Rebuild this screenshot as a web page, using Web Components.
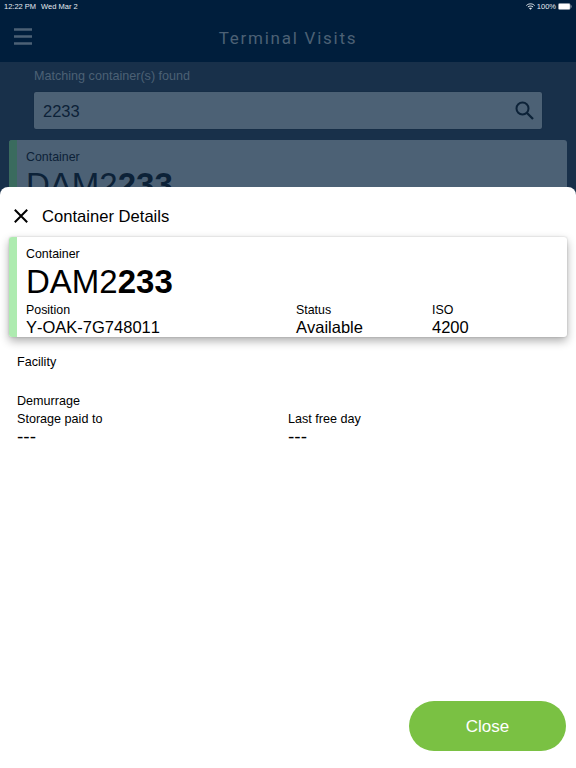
<!DOCTYPE html>
<html lang="en">
<head>
<meta charset="utf-8">
<title>Terminal Visits</title>
<style>
  html, body { margin: 0; padding: 0; }
  body { font-family: "Liberation Sans", Arial, sans-serif; background: #18304a; }
</style>
</head>
<body>
<terminal-app>
  <app-header slot="top"></app-header>
  <search-panel slot="top" label="Matching container(s) found" value="2233"></search-panel>
  <container-card slot="top" dimmed prefix="DAM2" match="233"></container-card>
  <details-sheet slot="sheet" heading="Container Details">
    <container-card prefix="DAM2" match="233" position="Y-OAK-7G748011" status="Available" iso="4200"></container-card>
    <detail-section>
      <span slot="title">Facility</span>
    </detail-section>
    <detail-section>
      <span slot="title">Demurrage</span>
      <info-pair label="Storage paid to" value="---"></info-pair>
      <info-pair label="Last free day" value="---"></info-pair>
    </detail-section>
  </details-sheet>
</terminal-app>

<script>
  // Raiz de la pagina: fondo oscuro + hoja blanca encima
  class TerminalApp extends HTMLElement {
    constructor() {
      super();
      this.attachShadow({ mode: "open" });
      this.shadowRoot.innerHTML = `
        <style>
          :host { display: block; position: relative; width: 576px; height: 768px; overflow: hidden; background: #18304a; }
          .sheet { position: absolute; left: 0; right: 0; top: 187px; bottom: 0; }
        </style>
        <slot name="top"></slot>
        <div class="sheet"><slot name="sheet"></slot></div>
      `;
    }
  }

  class AppHeader extends HTMLElement {
    constructor() {
      super();
      this.attachShadow({ mode: "open" });
      this.shadowRoot.innerHTML = `
        <style>
          :host { display: block; height: 62px; background: #001e3c; color: #fff; }
          .status {
            display: flex; justify-content: space-between; align-items: center;
            height: 12px; padding: 0 4px 0 4px; font-size: 7.5px; color: #e6ebf0;
          }
          .status .right { display: flex; align-items: center; gap: 2px; }
          .status .left span { margin-right: 5px; }
          .bar { display: flex; align-items: center; height: 50px; position: relative; }
          .menu { display: flex; margin-left: 14px; margin-top: -1px; }
          h1 {
            position: absolute; left: 0; right: 0; top: 16px; margin: 0; text-align: center;
            font: 400 17px Roboto, "Liberation Sans", sans-serif; letter-spacing: 1.75px; color: #4c6175;
          }
        </style>
        <div class="status">
          <div class="left"><span>12:22 PM</span><span>Wed Mar 2</span></div>
          <div class="right">
            <svg width="9" height="7" viewBox="0 0 9 7" fill="none" stroke="#e6ebf0" stroke-width="1"><path d="M.4 2.5C2.7.3 6.3.3 8.6 2.5"/><path d="M1.9 4C3.4 2.7 5.6 2.7 7.1 4"/><path d="M4.5 6.8 3 5.2C3.9 4.6 5.1 4.6 6 5.2Z" fill="#e6ebf0" stroke="none"/></svg>
            <span>100%</span>
            <svg width="14" height="7" viewBox="0 0 14 7"><rect x=".4" y=".4" width="11.7" height="6.2" rx="1.4" fill="#fff" stroke="#8b99a8" stroke-width=".6"/><rect x="12.6" y="2.4" width="1" height="2.2" fill="#8b99a8"/></svg>
          </div>
        </div>
        <div class="bar">
          <div class="menu">
            <svg width="18" height="17" viewBox="0 0 18 17"><path d="M0 1.5h18M0 8.5h18M0 15.5h18" stroke="#4c6175" stroke-width="2.4"/></svg>
          </div>
          <h1>Terminal Visits</h1>
        </div>
      `;
    }
  }

  class SearchPanel extends HTMLElement {
    constructor() {
      super();
      this.attachShadow({ mode: "open" });
    }
    connectedCallback() {
      this.shadowRoot.innerHTML = `
        <style>
          :host { display: block; padding: 7px 34px 11px 34px; }
          .label { font-size: 12.6px; line-height: 15px; color: #4c6175; margin-bottom: 8px; }
          .box {
            display: flex; align-items: center; justify-content: space-between;
            box-sizing: border-box; height: 37px; padding: 0 8px 0 9px;
            background: #4c6175; border-radius: 2px; box-shadow: 0 0 1px #0c2238;
            font-size: 16.5px; color: #0c2238;
          }
          .box span { padding-top: 2px; }
          svg { display: block; }
        </style>
        <div class="label">${this.getAttribute("label")}</div>
        <div class="box">
          <span>${this.getAttribute("value")}</span>
          <svg width="19" height="19" viewBox="0 0 19 19" fill="none" stroke="#0c2238" stroke-width="2"><circle cx="7.5" cy="7.5" r="6"/><path d="M12 12l6 6" stroke-width="2.3"/></svg>
        </div>
      `;
    }
  }

  // Tarjeta de contenedor, se usa en el fondo (dimmed) y en la hoja
  class ContainerCard extends HTMLElement {
    constructor() {
      super();
      this.attachShadow({ mode: "open" });
    }
    connectedCallback() {
      const a = (n) => this.getAttribute(n);
      // la tarjeta del fondo queda tapada por la hoja: solo lleva la cabecera
      const details = this.hasAttribute("dimmed") ? "" : `
        <div class="grid">
          <div><div class="small">Position</div><div class="val">${a("position")}</div></div>
          <div><div class="small">Status</div><div class="val">${a("status")}</div></div>
          <div><div class="small">ISO</div><div class="val">${a("iso")}</div></div>
        </div>`;
      this.shadowRoot.innerHTML = `
        <style>
          :host {
            display: block; box-sizing: border-box; height: 100px; margin: 0 9px;
            padding: 0 0 0 17px; border-radius: 3px; position: relative; overflow: hidden;
            background: #fff; color: #000;
          }
          :host([dimmed]) { background: #4c6175; color: #0c2238; }
          .edge { position: absolute; left: 0; top: 0; bottom: 0; width: 8px; background: #aeebb0; }
          :host([dimmed]) .edge { background: #3a6b5e; }
          .small { font-size: 12.4px; line-height: 15px; }
          .name { font-size: 33px; line-height: 38px; margin-top: 1px; height: 38px; }
          .name b { font-weight: 700; }
          .top { padding-top: 10px; }
          .grid { display: grid; grid-template-columns: 270px 136px 1fr; margin-top: 2px; }
          .val { font-size: 16.5px; line-height: 19px; font-kerning: none; }
        </style>
        <div class="edge"></div>
        <div class="top small">Container</div>
        <div class="name">${a("prefix")}<b>${a("match")}</b></div>
        ${details}
      `;
    }
  }

  class DetailsSheet extends HTMLElement {
    constructor() {
      super();
      this.attachShadow({ mode: "open" });
    }
    connectedCallback() {
      this.shadowRoot.innerHTML = `
        <style>
          :host {
            display: flex; flex-direction: column; box-sizing: border-box; height: 100%;
            background: #fff; color: #000; border-radius: 8px 8px 0 0;
          }
          .title { display: flex; align-items: center; gap: 14px; height: 50px; padding: 8px 0 0 14px; box-sizing: border-box; font-size: 16.6px; }
          .title span { padding-top: 2px; }
          svg { display: block; }
          ::slotted(container-card) { box-shadow: 0 4px 10px rgba(0,0,0,.32), 0 0 2px rgba(0,0,0,.2); margin-bottom: 18px; }
          .body { flex: 1; }
          .foot { display: flex; justify-content: flex-end; padding: 0 10px 17px 0; }
        </style>
        <div class="title">
          <svg width="14" height="14" viewBox="0 0 14 14"><path d="M.8.8l12.4 12.4M13.2.8.8 13.2" stroke="#000" stroke-width="2" fill="none"/></svg>
          <span>${this.getAttribute("heading")}</span>
        </div>
        <div class="body"><slot></slot></div>
        <div class="foot"><pill-button>Close</pill-button></div>
      `;
    }
  }

  class DetailSection extends HTMLElement {
    constructor() {
      super();
      this.attachShadow({ mode: "open" });
      this.shadowRoot.innerHTML = `
        <style>
          :host { display: block; padding: 0 0 0 17px; margin-bottom: 21px; font-size: 12.6px; line-height: 15px; }
          .pairs { display: grid; grid-template-columns: 271px 1fr; margin-top: 3px; }
        </style>
        <slot name="title"></slot>
        <div class="pairs"><slot></slot></div>
      `;
    }
  }

  class InfoPair extends HTMLElement {
    constructor() {
      super();
      this.attachShadow({ mode: "open" });
    }
    connectedCallback() {
      this.shadowRoot.innerHTML = `
        <style>
          :host { display: block; }
          .v { font-size: 19px; line-height: 19px; }
        </style>
        <div>${this.getAttribute("label")}</div>
        <div class="v">${this.getAttribute("value")}</div>
      `;
    }
  }

  class PillButton extends HTMLElement {
    constructor() {
      super();
      this.attachShadow({ mode: "open" });
      this.shadowRoot.innerHTML = `
        <style>
          :host {
            display: flex; align-items: center; justify-content: center; box-sizing: border-box;
            width: 157px; height: 50px; padding-top: 1px; border-radius: 25px;
            background: #7ac143; color: #fff; font-size: 17px;
          }
        </style>
        <slot></slot>
      `;
    }
  }

  customElements.define("terminal-app", TerminalApp);
  customElements.define("app-header", AppHeader);
  customElements.define("search-panel", SearchPanel);
  customElements.define("container-card", ContainerCard);
  customElements.define("details-sheet", DetailsSheet);
  customElements.define("detail-section", DetailSection);
  customElements.define("info-pair", InfoPair);
  customElements.define("pill-button", PillButton);
</script>
</body>
</html>
